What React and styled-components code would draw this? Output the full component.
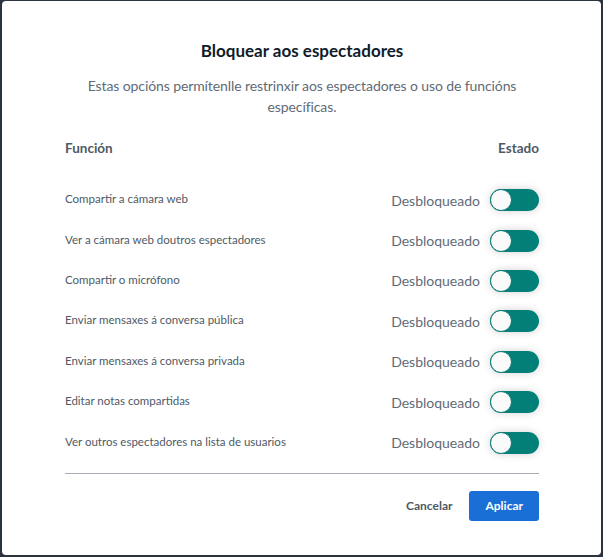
import React from "react";
import styled, { createGlobalStyle } from "styled-components";

const Global = createGlobalStyle`
  html, body { margin: 0; padding: 0; background: #2a333e; }
  body { font-family: "Lato", "Liberation Sans", sans-serif; }
  * { box-sizing: border-box; }
`;

const Overlay = styled.div`
  width: 603px;
  height: 557px;
  padding: 1px 2px 2px 2px;
  background: #2a333e;
`;

const Modal = styled.div`
  height: 100%;
  background: #ffffff;
  border-radius: 4px;
  padding: 38px 62px 0 63px;
  display: flex;
  flex-direction: column;
`;

const Title = styled.h2`
  margin: 0;
  text-align: center;
  font-size: 17px;
  font-weight: 700;
  color: #0f1c2b;
  line-height: 24px;
`;

const Description = styled.p`
  margin: 12px -10px 0;
  text-align: center;
  font-size: 14px;
  line-height: 21px;
  color: #5f6b77;
  letter-spacing: -0.1px;
`;

const HeaderRow = styled.div`
  margin-top: 21px;
  display: flex;
  justify-content: space-between;
  font-size: 13.5px;
  font-weight: 700;
  color: #4e5a66;
  line-height: 20px;
`;

const List = styled.div`
  margin-top: 22px;
  display: flex;
  flex-direction: column;
`;

const Row = styled.div`
  height: 40.4px;
  display: flex;
  align-items: center;
  justify-content: space-between;
`;

const Label = styled.span`
  font-size: 11.5px;
  color: #4e5a66;
  margin-top: -3px;
`;

const StatusCell = styled.div`
  display: flex;
  align-items: center;
  gap: 10px;
`;

const Status = styled.span`
  font-size: 14px;
  color: #5f6b77;
`;

const Toggle = styled.div`
  position: relative;
  width: 49px;
  height: 22px;
  border-radius: 11px;
  background: linear-gradient(90deg, #0b7d78 0%, #008078 100%);
  box-shadow: 0 0 8px rgba(0, 0, 0, 0.18);
`;

const Knob = styled.span`
  position: absolute;
  left: 0;
  top: 0;
  width: 22px;
  height: 22px;
  border-radius: 50%;
  background: #fafafa;
  border: 1.5px solid #0b7d78;
`;

const Divider = styled.hr`
  margin: 10px 0 0;
  border: 0;
  border-top: 1px solid #a7aeb6;
`;

const Footer = styled.div`
  margin-top: 17px;
  display: flex;
  justify-content: flex-end;
  align-items: center;
  gap: 17px;
`;

const Button = styled.button`
  font-family: inherit;
  font-size: 12px;
  font-weight: 700;
  height: 30px;
  border-radius: 3px;
  border: 0;
  cursor: pointer;
  color: ${(p) => (p.$primary ? "#ffffff" : "#4e5a66")};
  background: ${(p) => (p.$primary ? "#1a6fd6" : "transparent")};
  padding: ${(p) => (p.$primary ? "0 16px" : "0 0")};
`;

const rows = [
  "Compartir a cámara web",
  "Ver a cámara web doutros espectadores",
  "Compartir o micrófono",
  "Enviar mensaxes á conversa pública",
  "Enviar mensaxes á conversa privada",
  "Editar notas compartidas",
  "Ver outros espectadores na lista de usuarios",
];

export default function App() {
  return (
    <>
      <Global />
      <Overlay>
        <Modal>
          <Title>Bloquear aos espectadores</Title>
          <Description>
            Estas opcións permítenlle restrinxir aos espectadores o uso de funcións específicas.
          </Description>
          <HeaderRow>
            <span>Función</span>
            <span>Estado</span>
          </HeaderRow>
          <List>
            {rows.map((r) => (
              <Row key={r}>
                <Label>{r}</Label>
                <StatusCell>
                  <Status>Desbloqueado</Status>
                  <Toggle>
                    <Knob />
                  </Toggle>
                </StatusCell>
              </Row>
            ))}
          </List>
          <Divider />
          <Footer>
            <Button>Cancelar</Button>
            <Button $primary>Aplicar</Button>
          </Footer>
        </Modal>
      </Overlay>
    </>
  );
}
